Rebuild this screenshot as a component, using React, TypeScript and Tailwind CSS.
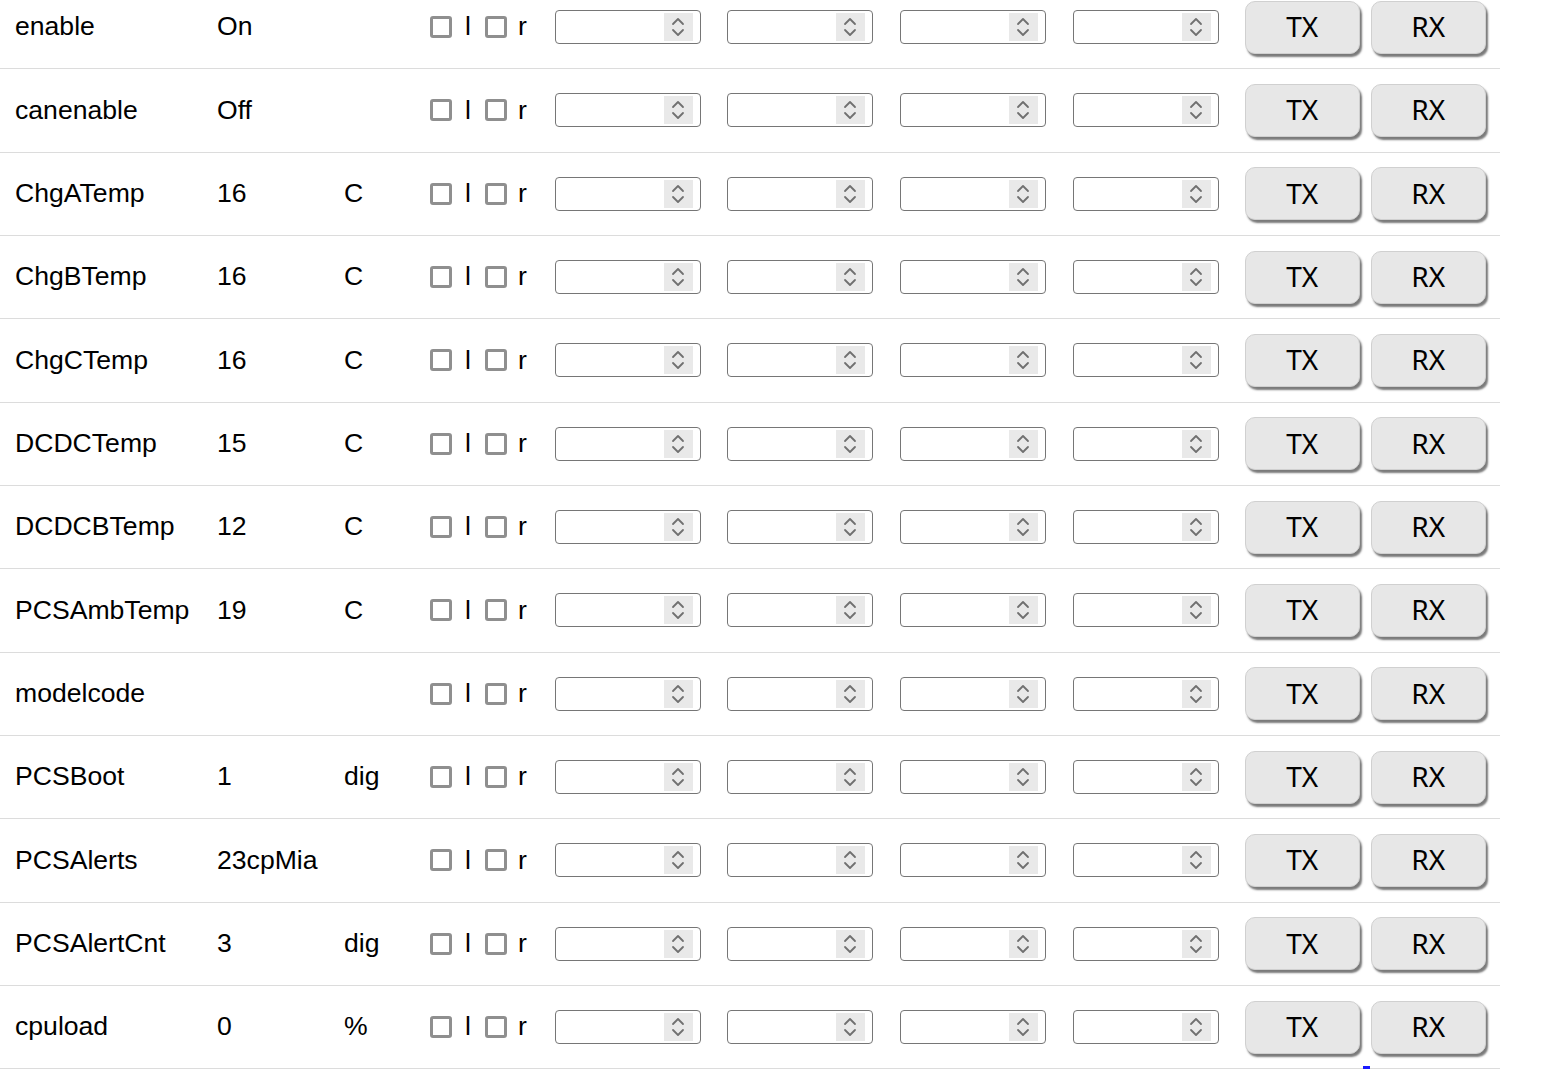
import React from 'react';

type Row = { name: string; value: string; unit: string };

const rows: Row[] = [
  { name: 'enable', value: 'On', unit: '' },
  { name: 'canenable', value: 'Off', unit: '' },
  { name: 'ChgATemp', value: '16', unit: 'C' },
  { name: 'ChgBTemp', value: '16', unit: 'C' },
  { name: 'ChgCTemp', value: '16', unit: 'C' },
  { name: 'DCDCTemp', value: '15', unit: 'C' },
  { name: 'DCDCBTemp', value: '12', unit: 'C' },
  { name: 'PCSAmbTemp', value: '19', unit: 'C' },
  { name: 'modelcode', value: '', unit: '' },
  { name: 'PCSBoot', value: '1', unit: 'dig' },
  { name: 'PCSAlerts', value: '23cpMia', unit: '' },
  { name: 'PCSAlertCnt', value: '3', unit: 'dig' },
  { name: 'cpuload', value: '0', unit: '%' },
];

const Spinner = () => (
  <div className="w-[29px] h-[28px] bg-[#e9e9e9] flex items-center justify-center">
    <svg width="14" height="24" viewBox="0 0 14 24" fill="none" stroke="#707070" strokeWidth="1.8" strokeLinecap="round" strokeLinejoin="round">
      <path d="M2 9 L7 4 L12 9" />
      <path d="M2 15 L7 20 L12 15" />
    </svg>
  </div>
);

const NumberBox = ({ gap }: { gap: string }) => (
  <div className={`${gap} w-[146px] h-[34px] border border-[#767676] rounded-[4px] bg-white flex items-center pr-[7px]`}>
    <input type="text" className="flex-1 min-w-0 h-full bg-transparent outline-none px-2 text-[20px]" />
    <Spinner />
  </div>
);

const Check = () => (
  <span className="inline-block w-[22px] h-[22px] border-[3px] border-[#8f8f8f] rounded-[3px] bg-white" />
);

const Btn = ({ label, className }: { label: string; className?: string }) => (
  <button
    className={`w-[115px] h-[53px] rounded-[10px] bg-[#e7e7e7] border border-[#d0d0d0] shadow-[2px_3px_2px_#7a7a7a] text-[28px] text-black leading-none pb-[2px] ${className ?? ''}`}
    style={{ fontFamily: '"Noto Sans", "Open Sans", sans-serif' }}
  >
    {label}
  </button>
);

export default function App() {
  return (
    <div className="h-[1070px] overflow-hidden bg-white text-black" style={{ fontFamily: '"Liberation Sans", Arial, sans-serif' }}>
      <div className="w-[1500px] -mt-[14px]">
        {rows.map((r, i) => (
          <div key={i} className="h-[83.33px] border-b border-[#dcdcdc] flex items-center text-[26.6px]">
            <div className="w-[217px] pl-[15px] whitespace-nowrap">{r.name}</div>
            <div className="w-[127px] whitespace-nowrap">{r.value}</div>
            <div className="w-[86px]">{r.unit}</div>
            <Check />
            <span className="ml-[13px]">l</span>
            <span className="ml-[14px] flex"><Check /></span>
            <span className="ml-[11px]">r</span>
            <NumberBox gap="ml-[28px]" />
            <NumberBox gap="ml-[26px]" />
            <NumberBox gap="ml-[27px]" />
            <NumberBox gap="ml-[27px]" />
            <Btn label="TX" className="ml-[26px]" />
            <Btn label="RX" className="ml-[11px]" />
          </div>
        ))}
      </div>
      <div className="ml-[1363px] -mt-[3px] w-[7px] h-[3px] bg-[#1a1aff]" />
    </div>
  );
}
